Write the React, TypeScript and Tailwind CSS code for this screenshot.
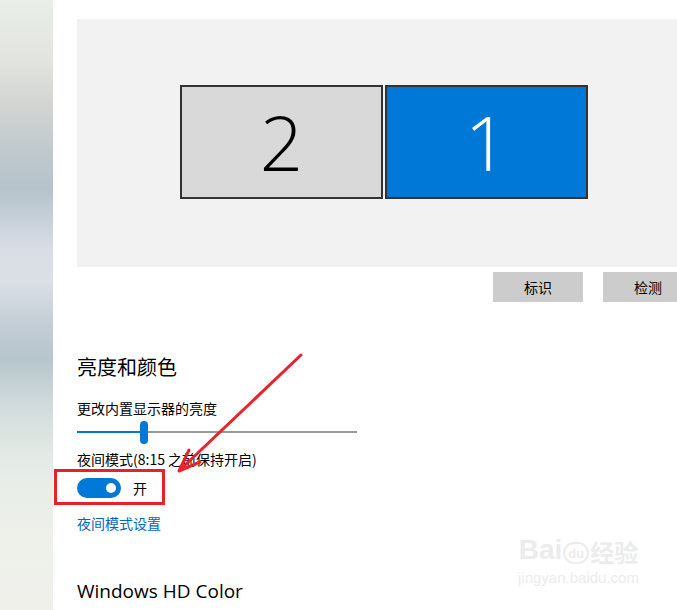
import React from 'react';

const cjk = "font-['Microsoft_YaHei','Noto_Sans_CJK_SC',sans-serif]";

const Monitor: React.FC<{ n: string; active?: boolean }> = ({ n, active }) => (
    <div
        className={
            'w-[203px] h-[114px] border-2 border-[#333333] flex items-center justify-center ' +
            (active ? 'bg-[#0078d7] text-white' : 'bg-[#d9d9d9] text-black')
        }
    >
        <span className="font-['Open_Sans',sans-serif] font-light text-[76px] leading-none">{n}</span>
    </div>
);

const App: React.FC = () => {
    return (
        <div className={'relative flex w-[677px] h-[610px] overflow-hidden bg-white ' + cjk}>
            {/* blurred desktop strip */}
            <div className="w-[53px] shrink-0 bg-[linear-gradient(180deg,#e9eee8_0%,#e2e4e0_10%,#d3d5d2_17%,#bfc9cd_25%,#b5c3cc_31%,#d9dee6_41%,#dbe0e7_46%,#c4ced6_53%,#b7c5cd_59%,#cfdadb_66%,#e4ebe6_75%,#eef1ea_88%,#f0f0eb_100%)]" />

            <div className="flex-1 pl-[24px] flex flex-col text-black">
                <div className="mt-[19px] h-[248px] bg-[#f2f2f2] pt-[66px] pl-[103px] flex gap-[2px]">
                    <Monitor n="2" />
                    <Monitor n="1" active />
                </div>

                <div className="mt-[5px] h-[30px] flex gap-[20px] pl-[416px]">
                    <button className="w-[90px] h-[30px] shrink-0 bg-[#cccccc] text-[14px]">标识</button>
                    <button className="w-[90px] h-[30px] shrink-0 bg-[#cccccc] text-[14px]">检测</button>
                </div>

                <div className="mt-[51px] h-[28px] flex items-center text-[20px]">亮度和颜色</div>

                <div className="mt-[17px] h-[20px] flex items-center text-[14px]">更改内置显示器的亮度</div>

                <div className="mt-[2px] h-[24px] w-[280px] relative flex items-center">
                    <div className="h-[2px] w-[63px] bg-[#0078d7]" />
                    <div className="h-[2px] flex-1 bg-[#999999]" />
                    <div className="absolute left-[63px] top-[1px] w-[8px] h-[23px] rounded-full bg-[#0078d7]" />
                </div>

                <div className="mt-[5px] h-[20px] flex items-center text-[14px]">夜间模式(8:15 之前保持开启)</div>

                <div className="mt-[9px] h-[20px] flex items-center relative">
                    <div className="w-[44px] h-[20px] rounded-full bg-[#0078d7] flex items-center justify-end pr-[5px]">
                        <div className="w-[10px] h-[10px] rounded-full bg-white" />
                    </div>
                    <span className="ml-[12px] text-[14px]">开</span>
                    <div className="absolute left-[-23px] top-[-9px] w-[111px] h-[36px] border-[3px] border-[#e8202a]" />
                </div>

                <div className="mt-[15px] h-[20px] flex items-center text-[14px] text-[#0067c0]">夜间模式设置</div>

                <div className="mt-[44px] h-[28px] flex items-center font-['Open_Sans',sans-serif] text-[19px]">
                    Windows HD Color
                </div>
            </div>

            {/* annotation arrow */}
            <svg className="absolute left-0 top-0 pointer-events-none" width="677" height="610">
                <line x1="301" y1="355" x2="182" y2="468" stroke="#e8232b" strokeWidth="3" strokeLinecap="round" />
                <polyline
                    points="189,450 179,471 200,462"
                    fill="none"
                    stroke="#e8232b"
                    strokeWidth="3"
                    strokeLinecap="round"
                    strokeLinejoin="round"
                />
            </svg>

            {/* watermark */}
            <div className="absolute left-[518px] top-[536px] flex flex-col items-center text-[#ececec] pointer-events-none">
                <div className="flex items-end font-['Liberation_Sans',sans-serif] font-bold text-[28px] leading-none">
                    <span>Bai</span>
                    <span className="mx-[1px] w-[26px] h-[22px] rounded-full border-2 border-[#ececec] text-[13px] flex items-center justify-center">du</span>
                    <span className={'text-[24px] ' + cjk}>经验</span>
                </div>
                <div className="font-['Liberation_Sans',sans-serif] text-[15px] leading-none mt-[6px]">jingyan.baidu.com</div>
            </div>
        </div>
    );
};

export default App;
